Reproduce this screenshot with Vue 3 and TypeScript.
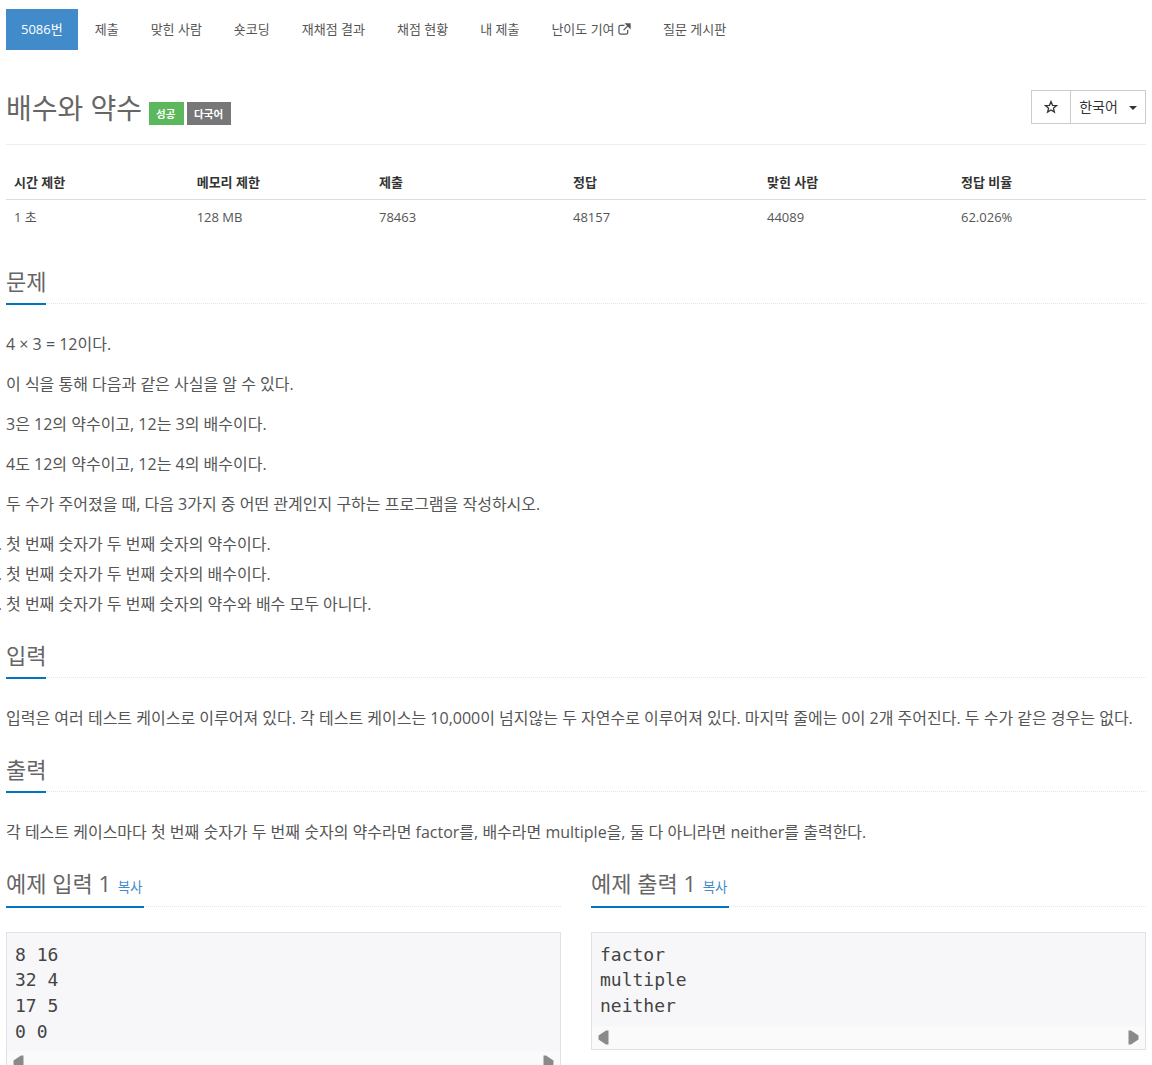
<script setup lang="ts">
const tabs = ['제출', '맞힌 사람', '숏코딩', '재채점 결과', '채점 현황', '내 제출']
const heads = ['시간 제한', '메모리 제한', '제출', '정답', '맞힌 사람', '정답 비율']
const cells = ['1 초', '128 MB', '78463', '48157', '44089', '62.026%']
const facts = ['4 × 3 = 12이다.', '이 식을 통해 다음과 같은 사실을 알 수 있다.', '3은 12의 약수이고, 12는 3의 배수이다.', '4도 12의 약수이고, 12는 4의 배수이다.', '두 수가 주어졌을 때, 다음 3가지 중 어떤 관계인지 구하는 프로그램을 작성하시오.']
const items = ['첫 번째 숫자가 두 번째 숫자의 약수이다.', '첫 번째 숫자가 두 번째 숫자의 배수이다.', '첫 번째 숫자가 두 번째 숫자의 약수와 배수 모두 아니다.']
const samples = [
  { title: '예제 입력 1', text: '8 16\n32 4\n17 5\n0 0' },
  { title: '예제 출력 1', text: 'factor\nmultiple\nneither' },
]
</script>

<template>
  <div class="page">
    <ul class="tabs">
      <li class="tab active">5086번</li>
      <li v-for="t in tabs" :key="t" class="tab">{{ t }}</li>
      <li class="tab">난이도 기여
        <svg class="ext" viewBox="0 0 14 13" width="13" height="12" aria-hidden="true">
          <path d="M10.500 7.200v3a1.800 1.800 0 0 1-1.800 1.800H2.800A1.800 1.800 0 0 1 1 10.200V4.300A1.800 1.800 0 0 1 2.800 2.500H7" fill="none" stroke="#555" stroke-width="1.300" />
          <path d="M6 7.800 12 1.800M8.600 1H13v4.400z" fill="#555" stroke="#555" stroke-width="1.300" />
        </svg>
      </li>
      <li class="tab">질문 게시판</li>
    </ul>

    <div class="title-row">
      <h1 class="title">
        <span>배수와 약수</span>
        <span class="label green">성공</span>
        <span class="label gray">다국어</span>
      </h1>
      <div class="btn-group">
        <div class="btn star">
          <svg viewBox="0 0 14 14" width="14" height="14" aria-hidden="true">
            <path d="M7 1.600 8.500 5.300 12.500 5.600 9.400 8.200 10.400 12.100 7 10 3.600 12.100 4.600 8.200 1.500 5.600 5.500 5.300z" fill="none" stroke="#333" stroke-width="1.300" stroke-linejoin="miter" />
          </svg>
        </div>
        <div class="btn lang">한국어<span class="caret"></span></div>
      </div>
    </div>

    <table class="info">
      <thead>
        <tr><th v-for="h in heads" :key="h">{{ h }}</th></tr>
      </thead>
      <tbody>
        <tr><td v-for="c in cells" :key="c">{{ c }}</td></tr>
      </tbody>
    </table>

    <section class="sec first">
      <h2 class="head"><span class="head-text">문제</span></h2>
      <div class="body">
        <p v-for="f in facts" :key="f">{{ f }}</p>
        <ol>
          <li v-for="i in items" :key="i">{{ i }}</li>
        </ol>
      </div>
    </section>

    <section class="sec">
      <h2 class="head"><span class="head-text">입력</span></h2>
      <div class="body">
        <p>입력은 여러 테스트 케이스로 이루어져 있다. 각 테스트 케이스는 10,000이 넘지않는 두 자연수로 이루어져 있다. 마지막 줄에는 0이 2개 주어진다. 두 수가 같은 경우는 없다.</p>
      </div>
    </section>

    <section class="sec">
      <h2 class="head"><span class="head-text">출력</span></h2>
      <div class="body">
        <p>각 테스트 케이스마다 첫 번째 숫자가 두 번째 숫자의 약수라면 factor를, 배수라면 multiple을, 둘 다 아니라면 neither를 출력한다.</p>
      </div>
    </section>

    <div class="samples">
      <section v-for="s in samples" :key="s.title" class="sample">
        <h2 class="head tall"><span class="head-text">{{ s.title }} <a class="copy">복사</a></span></h2>
        <div class="sample-box">
          <pre>{{ s.text }}</pre>
          <div class="scrollbar">
            <svg viewBox="0 0 11 15" width="11" height="15" aria-hidden="true"><path d="M10.500 0.500V14.500H8L0.500 9.500V5.500L8 0.500z" fill="#8a8a8a" /></svg>
            <svg viewBox="0 0 11 15" width="11" height="15" aria-hidden="true"><path d="M0.500 0.500V14.500H3L10.500 9.500V5.500L3 0.500z" fill="#8a8a8a" /></svg>
          </div>
        </div>
      </section>
    </div>
  </div>
</template>

<style>
html, body { margin: 0; overflow: hidden; height: 1065px; background: #fff; }
</style>

<style scoped>
.page {
  box-sizing: border-box;
  width: 1152px;
  height: 1065px;
  overflow: hidden;
  padding: 9px 6px 0;
  font-family: "Open Sans", "Noto Sans CJK KR", sans-serif;
  font-size: 13px;
  line-height: 1.6;
  color: #555;
}
.tabs { display: flex; list-style: none; margin: 0; padding: 0; }
.tab { padding: 10px 15px; margin-right: 2px; height: 21px; white-space: nowrap; }
.tab.active { background: #428bca; color: #fff; }
.ext { vertical-align: -1px; }

.title-row {
  display: flex;
  justify-content: space-between;
  align-items: flex-start;
  margin-top: 40px;
  height: 54px;
  border-bottom: 1px solid #eee;
}
.title { margin: 0; font-size: 28px; font-weight: 400; line-height: 36px; display: flex; align-items: flex-start; color: #666; }
.label {
  margin-top: 12px;
  height: 23px;
  line-height: 24px;
  padding: 0 7px;
  font-size: 10.500px;
  font-weight: 700;
  color: #fff;
}
.label.green { background: #5cb85c; margin-left: 7px; width: 21px; }
.label.gray { background: #777; margin-left: 3px; width: 30px; }
.btn-group { display: flex; height: 34px; box-sizing: border-box; border: 1px solid #ccc; color: #333; }
.btn { display: flex; align-items: center; justify-content: center; font-size: 14px; }
.star { width: 38px; border-right: 1px solid #ccc; }
.lang { width: 74px; }
.caret {
  margin-left: 11px;
  margin-top: 2px;
  border-top: 4px solid #333;
  border-left: 4px solid transparent;
  border-right: 4px solid transparent;
}

.info { width: 1140px; margin-top: 19px; border-collapse: separate; border-spacing: 0; table-layout: fixed; }
.info th, .info td { text-align: left; }
.info th { color: #333; font-weight: 700; border-bottom: 1px solid #ddd; height: 19px; padding: 8px 8px 6px; }
.info td { height: 20px; padding: 7px 8px 8px; }
.info th:nth-child(1) { width: 166.700px; }
.info th:nth-child(2) { width: 166.300px; }
.info th:nth-child(n + 3) { width: 178px; }
.info th:nth-child(6) { width: 177px; }

.sec { margin-top: 19px; }
.sec.first { margin-top: 28px; }
.head {
  margin: 0;
  font-size: 22px;
  font-weight: 400;
  line-height: 34px;
  height: 39px;
  border-bottom: 1px dotted #e5e5e5;
  color: #666;
}
.head-text {
  display: inline-block;
  height: 39px;
  border-bottom: 2px solid #0076c0;
}
.head.tall { height: 40px; }
.head.tall .head-text { height: 40px; }
.body { margin-top: 25px; font-size: 16px; line-height: 30px; }
.body p { margin: 0 0 10px; }
.body ol { margin: 0 0 10px; padding: 0; }
.copy { font-size: 13.500px; font-weight: 400; color: #428bca; margin-left: 1px; padding-right: 1px; }

.samples { display: grid; grid-template-columns: 555px 555px; column-gap: 30px; margin-top: 19px; }
.sample-box { margin-top: 25px; border: 1px solid #e1e1e8; background: #f7f7f9; }
pre {
  margin: 0;
  padding: 9px 8px 7px;
  font-family: "DejaVu Sans Mono", monospace;
  font-size: 18px;
  line-height: 25.700px;
  color: #444;
}
.scrollbar {
  height: 23px;
  background: #fafafa;
  display: flex;
  align-items: center;
  justify-content: space-between;
  padding: 0 6px;
}
</style>
